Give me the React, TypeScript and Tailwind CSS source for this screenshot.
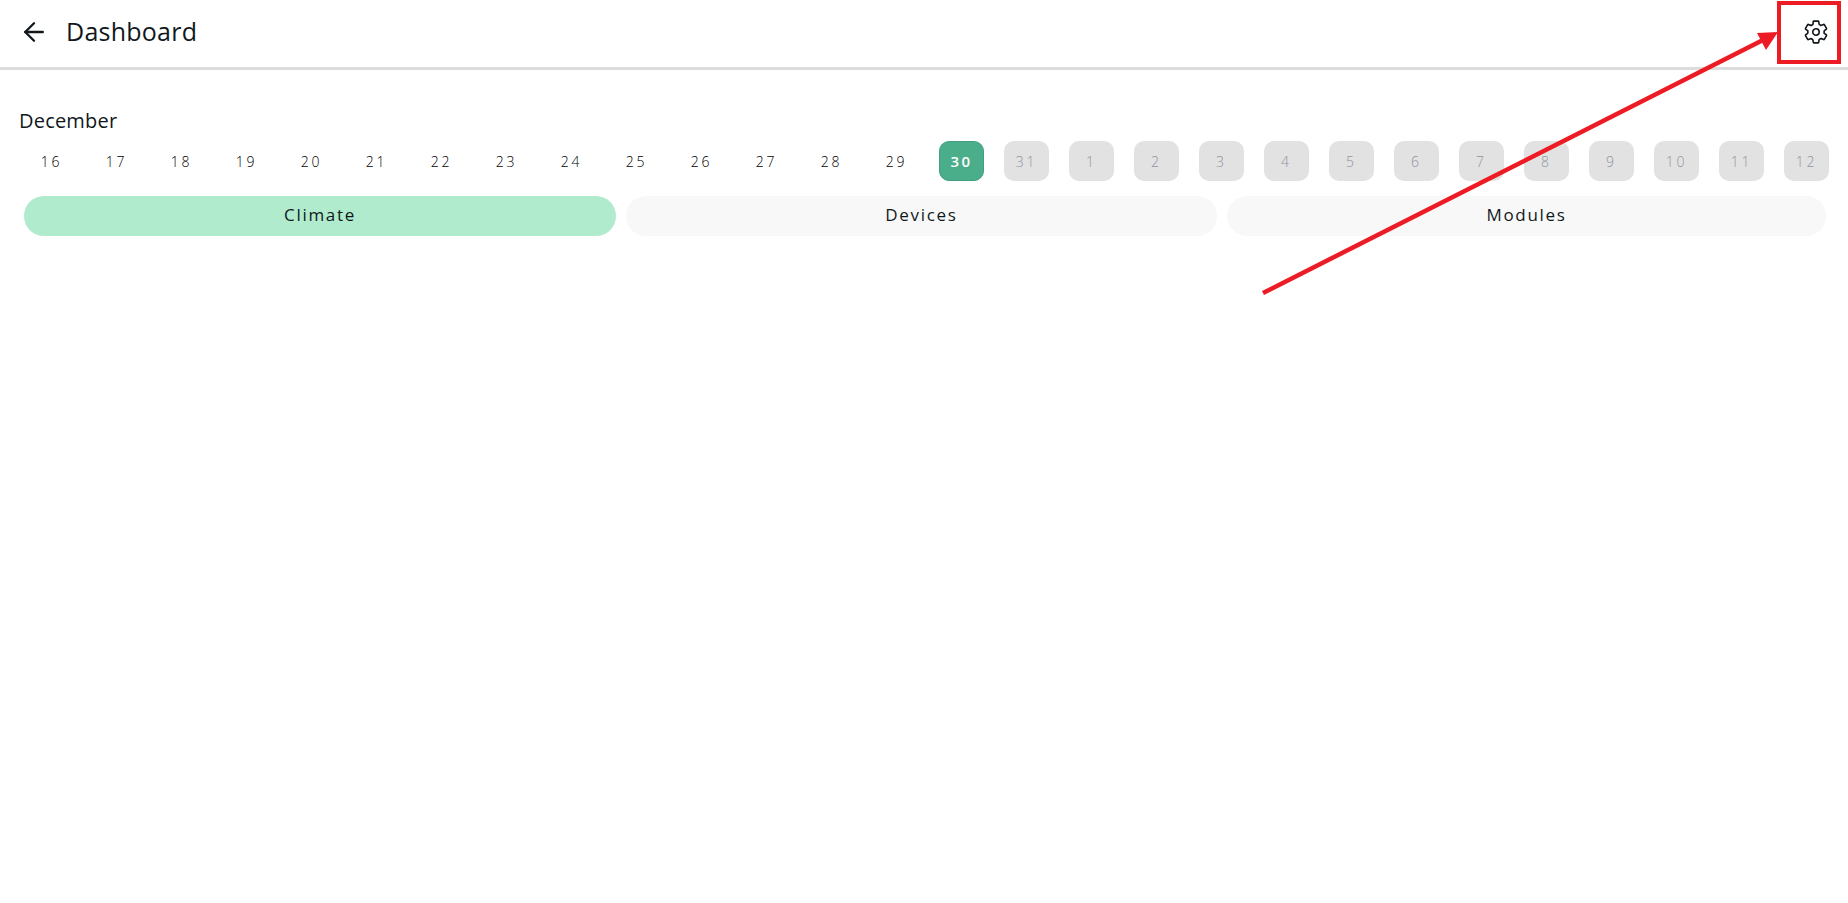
import { ArrowLeft } from 'lucide-react';
import { IoSettingsOutline } from 'react-icons/io5';

const days = [16, 17, 18, 19, 20, 21, 22, 23, 24, 25, 26, 27, 28, 29];
const disabledDays = [31, 1, 2, 3, 4, 5, 6, 7, 8, 9, 10, 11, 12];

function Annotation() {
  return (
    <div className="pointer-events-none absolute inset-0">
      <div className="absolute left-[1777px] top-[1px] h-[63px] w-[64px] border-[4px] border-[#ed1c24]" />
      <svg className="absolute left-0 top-0" width="1848" height="903">
        <line x1="1263" y1="293" x2="1765" y2="39" stroke="#ed1c24" strokeWidth="4.5" />
        <polygon points="1778,32 1757,33 1766,50" fill="#ed1c24" />
      </svg>
    </div>
  );
}

export default function App() {
  return (
    <div className="relative h-[903px] w-[1848px] overflow-hidden bg-white font-['Open_Sans',sans-serif] text-[#11181c]">
      <header className="flex h-[70px] items-center justify-between border-b-[3px] border-[#dcdcdc] pb-[4px] pl-[19px] pr-[19px]">
        <div className="flex items-center gap-[17px]">
          <ArrowLeft size={30} strokeWidth={1.9} />
          <h1 className="text-[25px] leading-none tracking-[0.01em]">Dashboard</h1>
        </div>
        <IoSettingsOutline size={26} className="mt-[1px]" />
      </header>

      <main className="pt-[40px]">
        <div className="pl-[19px] text-[20px] leading-[22px] tracking-[0.01em]">December</div>
        <div className="mt-[9px] flex gap-5 pl-[29px]">
          {days.map((d) => (
            <div key={d} className="flex h-10 w-[45px] items-center justify-center text-[14px] font-light tracking-[0.2em] text-black">
              {d}
            </div>
          ))}
          <div className="flex h-10 w-[45px] items-center justify-center rounded-[10px] border border-[#3f9f7f] bg-[#4bae8a] text-[15px] font-semibold tracking-[0.16em] text-white">
            30
          </div>
          {disabledDays.map((d) => (
            <div
              key={d}
              className="flex h-10 w-[45px] items-center justify-center rounded-[10px] bg-[#e2e2e2] text-[14px] font-light tracking-[0.2em] text-[#8f95a0]"
            >
              {d}
            </div>
          ))}
        </div>
        <div className="mt-[15px] flex gap-[10px] pl-[24px]">
          <button className="h-10 w-[592px] rounded-[20px] bg-[#b0ebcd] pb-[2px] text-[17px] tracking-[0.1em]">Climate</button>
          <button className="h-10 w-[591px] rounded-[20px] bg-[#f8f8f8] pb-[2px] text-[17px] tracking-[0.1em]">Devices</button>
          <button className="h-10 w-[599px] rounded-[20px] bg-[#f8f8f8] pb-[2px] text-[17px] tracking-[0.1em]">Modules</button>
        </div>
      </main>

      <Annotation />
    </div>
  );
}
